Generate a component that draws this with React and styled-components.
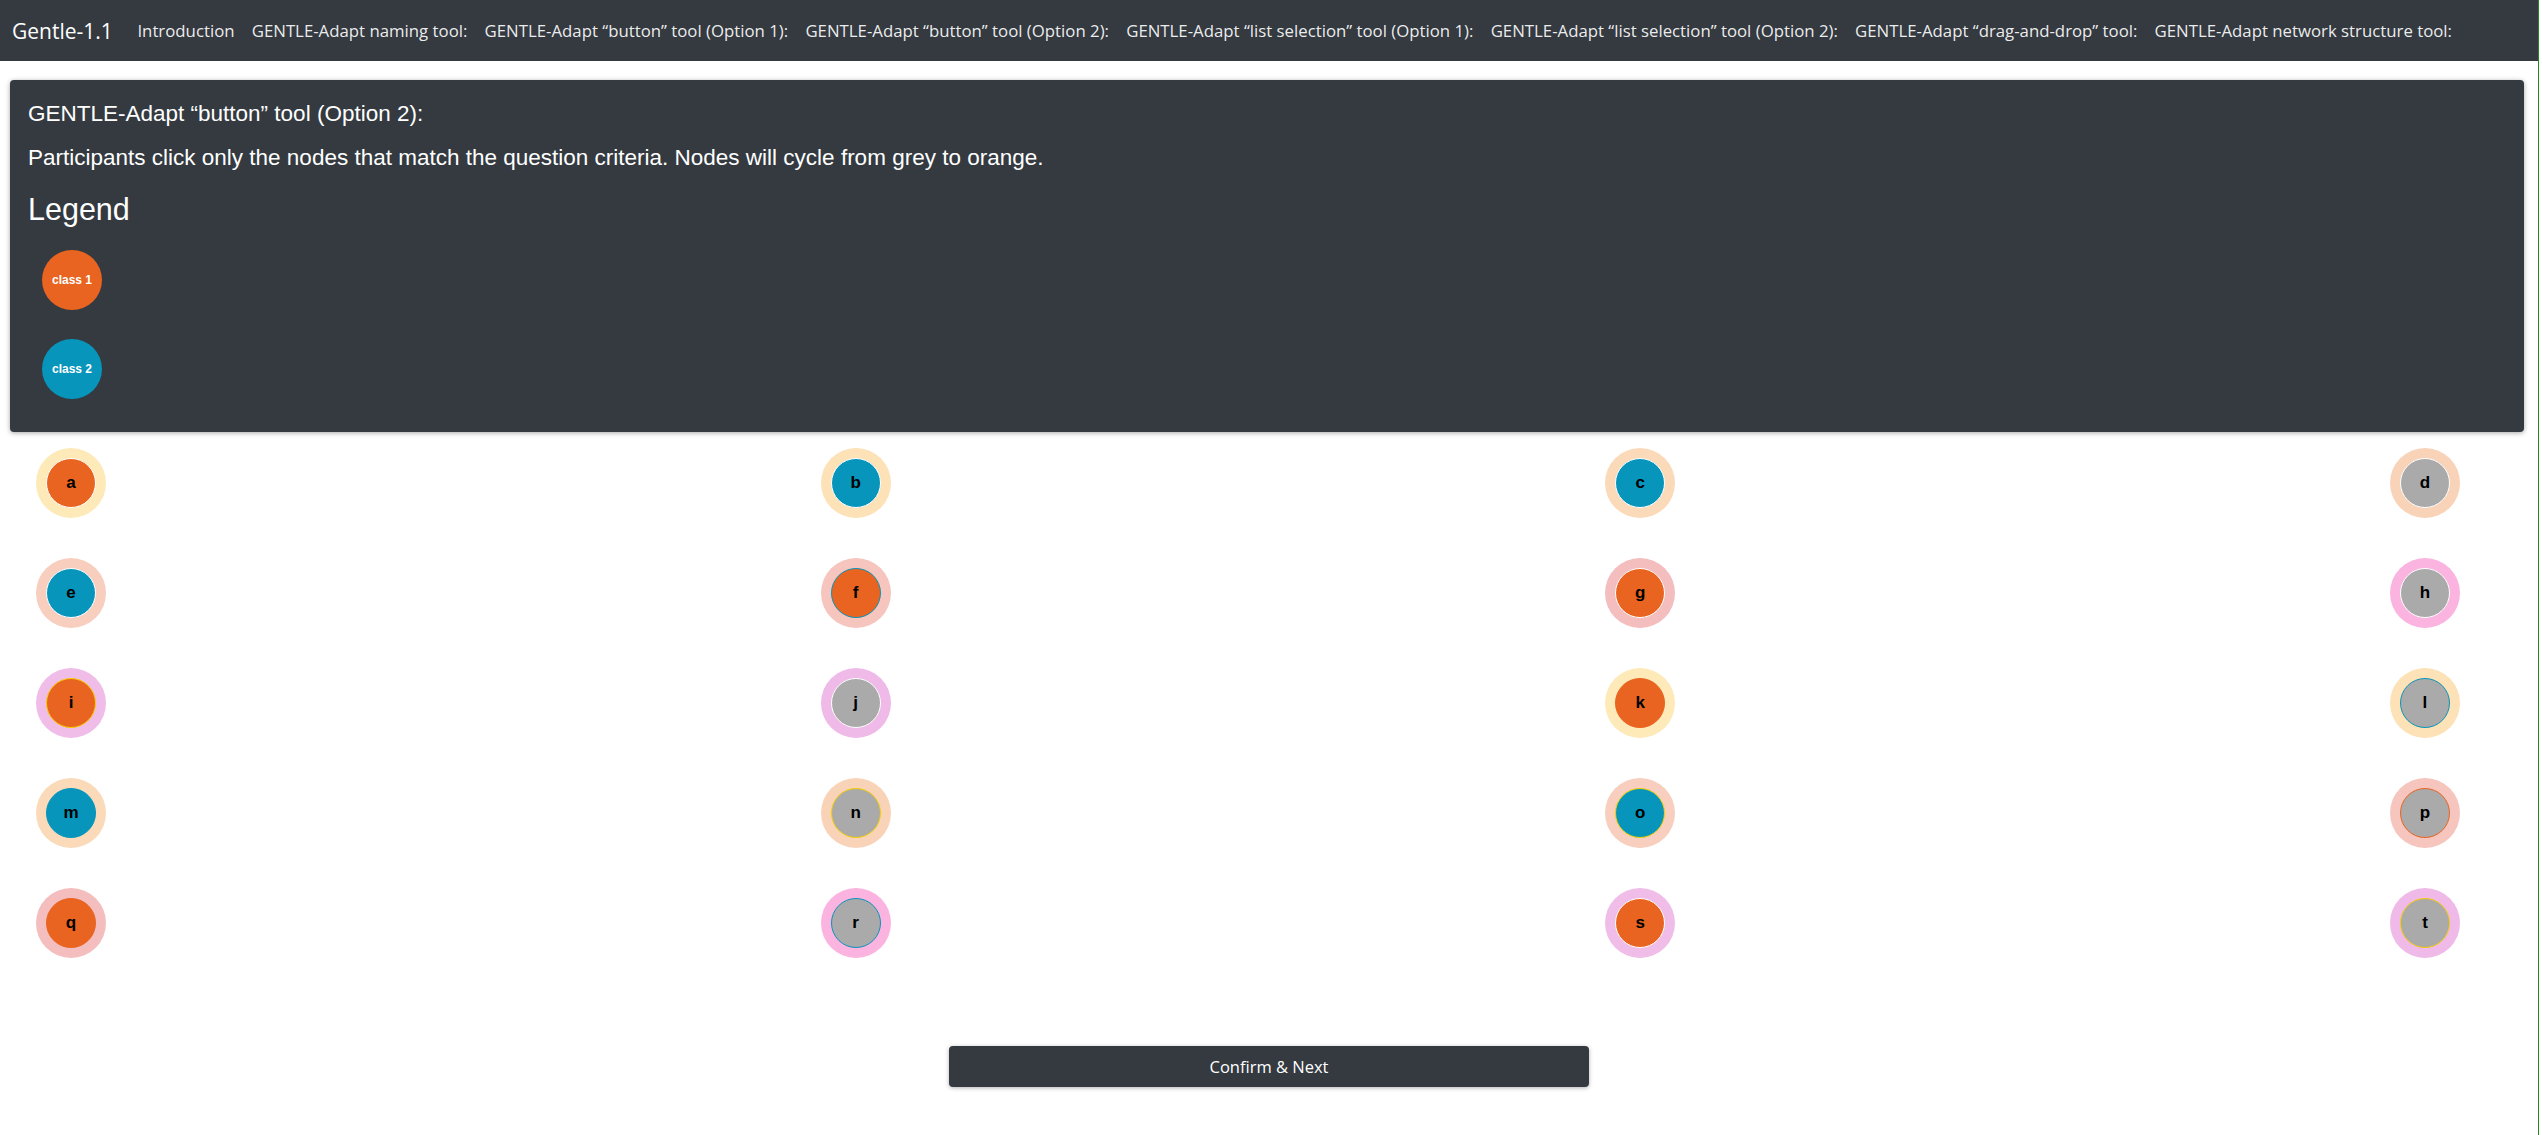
import styled, { createGlobalStyle } from "styled-components";

const GlobalStyle = createGlobalStyle`
  html, body {
    margin: 0;
    padding: 0;
    background: #fff;
  }
  * {
    box-sizing: border-box;
  }
`;

const DARK = "#343a40";
const ORANGE = "#e96420";
const TEAL = "#0795bc";
const GREY = "#aaaaaa";
const YELLOW = "#f4cf00";

const Page = styled.div`
  width: calc(100% - 3px);
  min-height: 100vh;
  border-right: 1px solid #1f8a1f;
  font-family: "Open Sans", "Liberation Sans", sans-serif;
`;

const Navbar = styled.nav`
  height: 61px;
  background: ${DARK};
  display: flex;
  align-items: center;
  padding: 0 12px;
`;

const Brand = styled.a`
  font-size: 21px;
  color: #fff;
  margin-right: 16px;
  text-decoration: none;
`;

const NavLinks = styled.div`
  display: flex;
  align-items: center;
`;

const NavLink = styled.a`
  color: rgba(255, 255, 255, 0.92);
  font-size: 16.8px;
  padding: 0 8.6px;
  text-decoration: none;
  white-space: nowrap;
`;

const Card = styled.section`
  margin: 19px 14px 0 10px;
  padding: 19px 18px 33px;
  background: ${DARK};
  color: #fff;
  border-radius: 4px;
  box-shadow: 0 1px 5px rgba(0, 0, 0, 0.35);
  font-family: "Liberation Sans", Arial, sans-serif;
`;

const Title = styled.h2`
  margin: 0;
  font-size: 22.5px;
  font-weight: 400;
  line-height: 1.3;
`;

const Text = styled.p`
  margin: 15px 0 0;
  font-size: 22.5px;
  line-height: 1.3;
`;

const LegendTitle = styled.h3`
  margin: 18px 0 0;
  font-size: 30.5px;
  font-weight: 400;
  line-height: 1.2;
`;

const LegendList = styled.div`
  display: flex;
  flex-direction: column;
  gap: 29px;
  margin: 23px 0 0 14px;
`;

const LegendDot = styled.div`
  width: 60px;
  height: 60px;
  border-radius: 50%;
  background: ${(p) => p.$fill};
  display: flex;
  align-items: center;
  justify-content: center;
  font-size: 12px;
  font-weight: 700;
  color: #fff;
`;

const Grid = styled.div`
  display: flex;
  flex-direction: column;
  gap: 40px;
  margin-top: 16px;
`;

const Row = styled.div`
  display: flex;
  justify-content: space-between;
  padding: 0 78px 0 36px;
`;

const Ring = styled.div`
  width: 70px;
  height: 70px;
  border-radius: 50%;
  background: ${(p) => p.$ring};
  display: flex;
  align-items: center;
  justify-content: center;
`;

const Dot = styled.button`
  width: 50px;
  height: 50px;
  padding: 0;
  border-radius: 50%;
  border: 1px solid ${(p) => p.$edge};
  background: ${(p) => p.$fill};
  display: flex;
  align-items: center;
  justify-content: center;
  font-family: "Liberation Sans", Arial, sans-serif;
  font-size: 17px;
  font-weight: 700;
  color: #000;
  cursor: pointer;
`;

const Footer = styled.div`
  display: flex;
  justify-content: center;
  margin-top: 88px;
`;

const ConfirmButton = styled.button`
  width: 640px;
  height: 41px;
  border: none;
  border-radius: 4px;
  background: ${DARK};
  color: #fff;
  font-family: "Open Sans", "Liberation Sans", sans-serif;
  font-size: 16.5px;
  box-shadow: 0 1px 4px rgba(0, 0, 0, 0.3);
  cursor: pointer;
`;

const links = [
  "Introduction",
  "GENTLE-Adapt naming tool:",
  "GENTLE-Adapt “button” tool (Option 1):",
  "GENTLE-Adapt “button” tool (Option 2):",
  "GENTLE-Adapt “list selection” tool (Option 1):",
  "GENTLE-Adapt “list selection” tool (Option 2):",
  "GENTLE-Adapt “drag-and-drop” tool:",
  "GENTLE-Adapt network structure tool:",
];

const rings = [
  "#fdeab8",
  "#fce2b6",
  "#fadab8",
  "#f8d3b8",
  "#f8cebe",
  "#f5c5be",
  "#f4bdbe",
  "#fbb3e0",
  "#f0bde9",
  "#efb9e8",
];

// letter, fill, edge
const nodes = [
  ["a", ORANGE, "#fff"],
  ["b", TEAL, "#fff"],
  ["c", TEAL, "#fff"],
  ["d", GREY, "#fff"],
  ["e", TEAL, "#fff"],
  ["f", ORANGE, TEAL],
  ["g", ORANGE, "#fff"],
  ["h", GREY, "#fff"],
  ["i", ORANGE, YELLOW],
  ["j", GREY, "#fff"],
  ["k", ORANGE, ORANGE],
  ["l", GREY, TEAL],
  ["m", TEAL, TEAL],
  ["n", GREY, YELLOW],
  ["o", TEAL, YELLOW],
  ["p", GREY, ORANGE],
  ["q", ORANGE, ORANGE],
  ["r", GREY, TEAL],
  ["s", ORANGE, "#fff"],
  ["t", GREY, YELLOW],
];

const rows = [0, 1, 2, 3, 4].map((r) => nodes.slice(r * 4, r * 4 + 4));

const App = () => {
  return (
    <Page>
      <GlobalStyle />
      <Navbar>
        <Brand href="#">Gentle-1.1</Brand>
        <NavLinks>
          {links.map((l) => (
            <NavLink key={l} href="#">
              {l}
            </NavLink>
          ))}
        </NavLinks>
      </Navbar>

      <Card>
        <Title>GENTLE-Adapt “button” tool (Option 2):</Title>
        <Text>
          Participants click only the nodes that match the question criteria.
          Nodes will cycle from grey to orange.
        </Text>
        <LegendTitle>Legend</LegendTitle>
        <LegendList>
          <LegendDot $fill={ORANGE}>class 1</LegendDot>
          <LegendDot $fill={TEAL}>class 2</LegendDot>
        </LegendList>
      </Card>

      <Grid>
        {rows.map((row, ri) => (
          <Row key={ri}>
            {row.map(([letter, fill, edge], ci) => (
              <Ring key={letter} $ring={rings[(ri * 4 + ci) % 10]}>
                <Dot $fill={fill} $edge={edge}>
                  {letter}
                </Dot>
              </Ring>
            ))}
          </Row>
        ))}
      </Grid>

      <Footer>
        <ConfirmButton>Confirm &amp; Next</ConfirmButton>
      </Footer>
    </Page>
  );
};

export default App;
